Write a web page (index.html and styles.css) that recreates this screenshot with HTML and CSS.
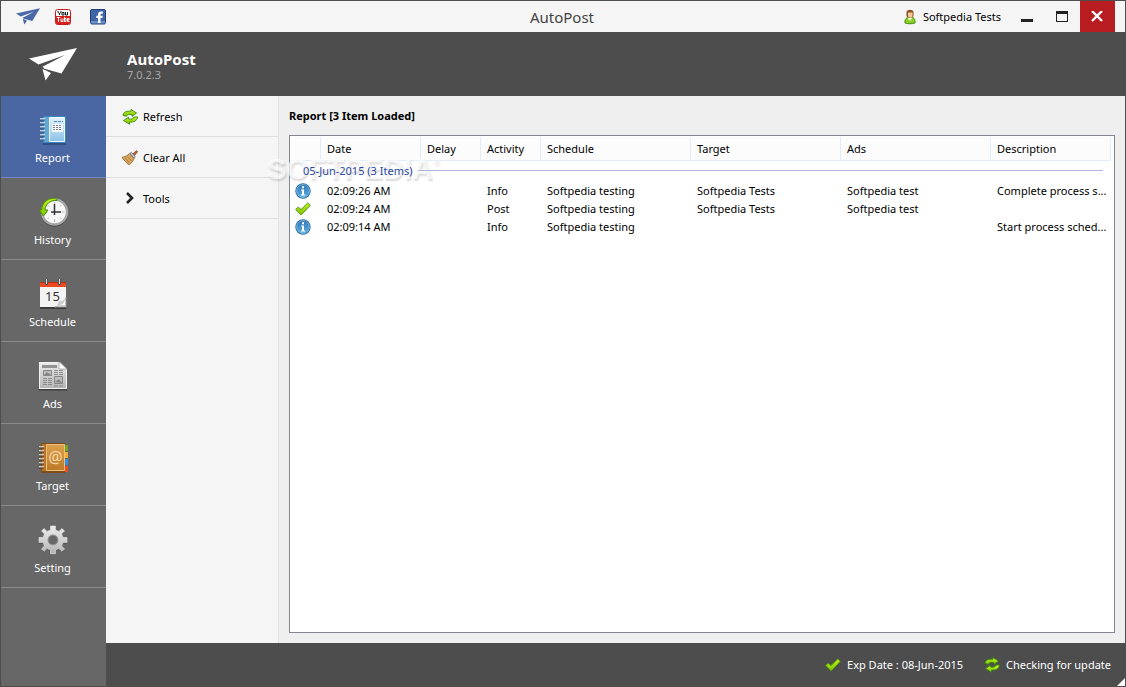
FILE: index.html
```html
<!doctype html>
<html lang="en">
    <head>
        <meta charset="utf-8">
        <title>AutoPost</title>
        <meta name="viewport" content="width=device-width, initial-scale=1">
        <link rel="stylesheet" href="styles.css">
    </head>
    <body>
        <!-- shared icons -->
        <svg class="defs" width="0" height="0" aria-hidden="true">
            <linearGradient id="greenFill" x1="0" y1="0" x2="0" y2="1"><stop offset="0" stop-color="#c4f020"/><stop offset="1" stop-color="#7fc400"/></linearGradient>
            <linearGradient id="blueFill" x1="0" y1="0" x2="0" y2="1"><stop offset="0" stop-color="#2f75b5"/><stop offset="1" stop-color="#5cb0e0"/></linearGradient>
            <linearGradient id="greyFill" x1="0" y1="0" x2="0" y2="1"><stop offset="0" stop-color="#ededed"/><stop offset="1" stop-color="#b4b4b4"/></linearGradient>
            <linearGradient id="coverFill" x1="0" y1="0" x2="0" y2="1"><stop offset="0" stop-color="#e2f2fb"/><stop offset="1" stop-color="#8ac2e6"/></linearGradient>
            <linearGradient id="tanFill" x1="0" y1="0" x2="0" y2="1"><stop offset="0" stop-color="#dda04c"/><stop offset="1" stop-color="#bd7a27"/></linearGradient>
            <symbol id="plane" viewBox="0 0 48 33">
                <path d="M0 10.500 48 0 32.500 25.500 15.500 20.800 13.500 18.800 36 7 9.500 16.500ZM13.500 21 16 22 22 25 16.500 32.500Z"/>
            </symbol>
            <symbol id="refresh" viewBox="0 0 16 16">
                <g fill="url(#greenFill)" stroke="#348a10" stroke-width=".9" stroke-linejoin="round">
                    <path d="M1 6.500C1.500 2.500 5 1.800 9 2.300L9 .5 14.500 4 10 7.500V5.600C7 5 5 5.500 4.500 7.200Z"/>
                    <path d="M15.500 8C15 12 11.500 13.500 7.500 13V15.200L1.500 11.500 6.500 8.300V10C9 10.500 11.500 10 12 8Z"/>
                </g>
            </symbol>
            <symbol id="check" viewBox="0 0 16 14">
                <path d="M.7 7.500 3.200 5.200 6 7.600 12.700 1 15.300 3.300 6.200 13Z" fill="url(#greenFill)" stroke="#4d9a0a" stroke-width="1" stroke-linejoin="round"/>
            </symbol>
            <symbol id="info" viewBox="0 0 16 16">
                <circle cx="8" cy="8" r="7.700" fill="#2669a6"/>
                <circle cx="8" cy="8" r="6.400" fill="url(#blueFill)" stroke="#9ccbea" stroke-width=".7"/>
                <path d="M7 3.300h2v2H7zM6 6.400h3v5h1.300v1.200H5.800v-1.200H7V7.500H6z" fill="#fff"/>
            </symbol>
            <symbol id="gear" viewBox="0 0 32 32">
                <path fill-rule="evenodd" stroke-linejoin="round" d="M13.500 2h5v4l3.500 1.400 3-2.900 2.500 2.500-2.900 3L26 13.500h4v5h-4L24.600 22l2.900 3-2.500 2.500-3-2.900-3.500 1.400v4h-5v-4L10 24.600l-3 2.900L4.500 25l2.900-3L6 18.500H2v-5h4L7.400 10 4.500 7 7 4.500l3 2.900L13.500 6zM16 11a5 5 0 1 0 0 10 5 5 0 1 0 0-10z"/>
            </symbol>
        </svg>

        <div class="window">
            <header class="titlebar">
                <nav class="links">
                    <a href="#home" aria-label="AutoPost"><svg class="icon-logo-small" width="24" height="17"><use href="#plane"/></svg></a>
                    <a href="#youtube" aria-label="YouTube">
                        <svg width="16" height="16" viewBox="0 0 16 16">
                            <rect x=".5" y=".5" width="15" height="15" rx="2" fill="#fff" stroke="#c01c1c"/>
                            <path d="M1 7h14v7a1 1 0 0 1-1 1H2a1 1 0 0 1-1-1z" fill="#d81e18"/>
                            <path d="M3 2v1.500l1.500 1L6 3.500V2M4.500 4.500V6M7 3.500h2V6H7zM10.500 3v3h2V3" fill="none" stroke="#181818"/>
                            <path d="M1.800 8.500h3.400M3.500 8.500V13M6 9.500v3h2v-3M9.500 8v4.500h1.500v-3H9.500M14.500 12.500H12.500v-3h1.500v1.500h-1.500" fill="none" stroke="#fff"/>
                        </svg>
                    </a>
                    <a href="#facebook" aria-label="Facebook">
                        <svg width="16" height="16" viewBox="0 0 16 16">
                            <rect x=".5" y=".5" width="15" height="14.500" rx="1.500" fill="#3f65a6" stroke="#203f7c"/>
                            <path d="M1 12h14v2.500H1z" fill="#6c8fc4"/>
                            <path d="M8 14V9H6.300V6.800H8V5.500C8 3.500 9.200 2.500 11 2.500h1.800v2.200h-1.200c-.8 0-1.100.4-1.100 1.100v1h2.200L12.400 9h-1.900v5z" fill="#fff"/>
                        </svg>
                    </a>
                </nav>
                <h1 class="title">AutoPost</h1>
                <div class="controls">
                    <span class="user">
                        <svg width="12" height="16" viewBox="0 0 12 16">
                            <path d="M1 14C.5 10 2.500 8 6 8s5.500 2 5 6C8 15 4 15 1 14Z" fill="#8bcf22" stroke="#478b10"/>
                            <path d="M3.700 8.700 6 12l2.300-3.300z" fill="#f6faea"/>
                            <path d="M2.500 3C3 0 9 0 9.500 3v4c-1 2-6 2-7 0z" fill="#8b5225"/>
                            <path d="M4 3.500h4.500V7C8 9 4.500 9 4 7z" fill="#f5c596"/>
                        </svg>
                        Softpedia Tests
                    </span>
                    <button class="win-btn" type="button" aria-label="Minimize"><svg width="12" height="12"><path d="M0 8h12v3H0z" fill="#222"/></svg></button>
                    <button class="win-btn" type="button" aria-label="Maximize"><svg width="12" height="12"><path d="M0 0h12v11H0zM1 3v7h10V3z" fill="#222" fill-rule="evenodd"/></svg></button>
                    <button class="win-btn close" type="button" aria-label="Close"><svg width="12" height="12"><path d="M1 0 11 10M11 0 1 10" stroke="#fff" stroke-width="2.400"/></svg></button>
                </div>
            </header>

            <div class="brand">
                <div class="brand-logo"><svg width="48" height="33"><use href="#plane"/></svg></div>
                <div class="brand-text">
                    <div class="brand-name">AutoPost</div>
                    <div class="brand-version">7.0.2.3</div>
                </div>
            </div>

            <div class="body">
                <nav class="sidebar">
                    <a class="side-item active" href="#report">
                        <svg width="32" height="32" viewBox="0 0 32 32">
                            <path d="M6 30h23" stroke="#263f6c" stroke-width="2" opacity=".6"/>
                            <path d="M6 2h23v27H6z" fill="#3a86bd"/>
                            <path d="M7 3h5v25H7z" fill="#65a8d4"/>
                            <path d="M12.500 3.500h15v24h-15z" fill="url(#coverFill)" stroke="#edf8ff"/>
                            <path d="M15 10h11v8H15z" fill="#f9fcfe"/>
                            <path d="M17 7.500h9" stroke="#4d83b2" stroke-dasharray="3 1"/>
                            <path d="M16 11.500h9M16 13.500h9M16 15.500h9" stroke="#778491" stroke-dasharray="2 1"/>
                            <path d="M3 5h5M3 9h5M3 13h5M3 17h5M3 21h5M3 25h5" stroke="#e8eef3" stroke-width="1.500"/>
                            <path d="M3 6h5M3 10h5M3 14h5M3 18h5M3 22h5M3 26h5" stroke="#31577b"/>
                        </svg>
                        Report
                    </a>
                    <a class="side-item" href="#history">
                        <svg width="32" height="32" viewBox="0 0 32 32">
                            <circle cx="17.500" cy="17" r="13.500" fill="#3e3e3e"/>
                            <circle cx="17.500" cy="16" r="12.500" fill="#f7f7f7" stroke="#a6a6a6" stroke-width="2.500"/>
                            <path d="M17.500 6v3M17.500 23v3M7.500 16h3M24.500 16h3M10.500 9l1.500 1.500M24.500 9 23 10.500M10.500 23l1.500-1.500M24.500 23 23 21.500" stroke="#b9b9b9"/>
                            <path d="M17.500 8v11M14 16h10" stroke="#353535" stroke-width="1.500"/>
                            <path d="M20 3C11 1 5 6 4.600 14H2l4.500 6 4.500-6H8C8.500 8 13 4 20 4.500Z" fill="url(#greenFill)" stroke="#438d0d"/>
                        </svg>
                        History
                    </a>
                    <a class="side-item" href="#schedule">
                        <svg width="32" height="32" viewBox="0 0 32 32">
                            <path d="M3 30h26" stroke="#3c3c3c" stroke-width="2"/>
                            <path d="M3 4h26v25H3z" fill="#f3f3f3"/>
                            <path d="M3 4h26v5H3z" fill="#ef4a1f"/>
                            <path d="M3 4.500h26" stroke="#b8310f"/>
                            <path d="M9.500 1v6M22.500 1v6" stroke="#555" stroke-width="3"/>
                            <path d="M9.500 1v5M22.500 1v5" stroke="#ddd"/>
                            <path d="M29 19v10H18c4-1 4-4 4-5 3 0 6-1 7-5Z" fill="#d2d2d2" stroke="#a8a8a8" stroke-width=".7"/>
                            <path d="M24 27c2-1 3-3 4-5v5z" fill="#fff"/>
                            <text class="cal-day" x="15.500" y="23" text-anchor="middle">15</text>
                        </svg>
                        Schedule
                    </a>
                    <a class="side-item" href="#ads">
                        <svg width="32" height="32" viewBox="0 0 32 32">
                            <path d="M2 29.500h28" stroke="#3e3e3e" stroke-width="2"/>
                            <path d="M2 2h21l7 7v20H2z" fill="url(#greyFill)"/>
                            <path d="M2.500 28.500v-26h20l7 7v19z" fill="none" stroke="#f1f1f1"/>
                            <path d="M22 2v7h8z" fill="#fff" stroke="#999" stroke-width=".7"/>
                            <path d="M5 5h15v3H5z" fill="#929292"/>
                            <path d="M6.500 10.500h8v5h-8zM17.500 16.500h8v7h-8z" fill="#bdbdbd" stroke="#858585"/>
                            <path d="m7 15 3-3 4 3zM18 22l4-3 3 4z" fill="#858585"/>
                            <path d="M17 10.500h9M17 12.500h9M17 14.500h9M6 18.500h9M6 20.500h9M6 22.500h9M6 24.500h9M17 26h9" stroke="#8a8a8a" stroke-dasharray="4 1"/>
                        </svg>
                        Ads
                    </a>
                    <a class="side-item" href="#target">
                        <svg width="32" height="32" viewBox="0 0 32 32">
                            <path d="M28 3h3v6h-3z" fill="#76a720"/>
                            <path d="M28 10h3v6h-3z" fill="#f4ad2f"/>
                            <path d="M28 17h3v6h-3z" fill="#338ee4"/>
                            <path d="M28 24h3v6h-3z" fill="#ed4e24"/>
                            <path d="M4 1h24v30H4z" fill="#7e4c18"/>
                            <path d="M5 2h4v27H5z" fill="#b87529"/>
                            <path d="M9.500 2.500h18v26h-18z" fill="url(#tanFill)" stroke="#edc07c"/>
                            <text class="at-sign" x="18.500" y="21" text-anchor="middle">@</text>
                            <path d="M2 5h5M2 9h5M2 13h5M2 17h5M2 21h5M2 25h5" stroke="#e6e6e6" stroke-width="1.500"/>
                            <path d="M2 6h5M2 10h5M2 14h5M2 18h5M2 22h5M2 26h5" stroke="#49301b"/>
                        </svg>
                        Target
                    </a>
                    <a class="side-item" href="#setting">
                        <svg width="32" height="32" viewBox="0 0 32 32">
                            <use href="#gear" y="1" fill="#404040"/>
                            <use href="#gear" fill="url(#greyFill)" stroke="#e4e4e4" stroke-width=".6"/>
                            <circle cx="16" cy="16" r="5" fill="#686868" stroke="#969696"/>
                        </svg>
                        Setting
                    </a>
                </nav>

                <div class="work">
                    <div class="panes">
                        <aside class="actions">
                            <button class="action" type="button"><svg width="16" height="16"><use href="#refresh"/></svg>Refresh</button>
                            <button class="action" type="button">
                                <svg width="16" height="16" viewBox="0 0 16 16">
                                    <path d="m11 4 3.500-3.500 1.200 1.200L12.500 5.500z" fill="#bd6335" stroke="#80401f" stroke-width=".7"/>
                                    <path d="M7.500 3.500 12 8.500C11 11.500 9 14 6.500 14.700L.5 8.500V7C3 7 5.500 5.500 7.500 3.500Z" fill="#d8a660" stroke="#916329" stroke-width=".8"/>
                                    <path d="m3 8 4 4.500M5.500 6.500l4 4.500" stroke="#9b6c32" stroke-width=".7"/>
                                    <path d="M8 3.300 9.500 2.300l3.800 4.500-1.200 1.500z" fill="#d8d8df" stroke="#62636e" stroke-width=".8"/>
                                </svg>
                                Clear All
                            </button>
                            <button class="action" type="button"><svg width="16" height="16"><path d="m5 2 5 5-5 5" fill="none" stroke="#222" stroke-width="2.600"/></svg>Tools</button>
                        </aside>

                        <main class="report">
                            <h2 class="report-title">Report [3 Item Loaded]</h2>
                            <div class="list">
                                <table>
                                    <colgroup>
                                        <col class="c-icon"><col class="c-date"><col class="c-short"><col class="c-short">
                                        <col class="c-wide"><col class="c-wide"><col class="c-wide"><col>
                                    </colgroup>
                                    <thead>
                                        <tr><th></th><th>Date</th><th>Delay</th><th>Activity</th><th>Schedule</th><th>Target</th><th>Ads</th><th>Description</th></tr>
                                    </thead>
                                    <tbody>
                                        <tr class="group"><td colspan="8"><div class="group-label">05-Jun-2015 (3 Items)</div></td></tr>
                                        <tr><td><svg width="16" height="16"><use href="#info"/></svg></td><td>02:09:26 AM</td><td></td><td>Info</td><td>Softpedia testing</td><td>Softpedia Tests</td><td>Softpedia test</td><td>Complete process s...</td></tr>
                                        <tr><td><svg width="16" height="14"><use href="#check"/></svg></td><td>02:09:24 AM</td><td></td><td>Post</td><td>Softpedia testing</td><td>Softpedia Tests</td><td>Softpedia test</td><td></td></tr>
                                        <tr><td><svg width="16" height="16"><use href="#info"/></svg></td><td>02:09:14 AM</td><td></td><td>Info</td><td>Softpedia testing</td><td></td><td></td><td>Start process sched...</td></tr>
                                    </tbody>
                                </table>
                            </div>
                            <div class="watermark">SOFTPEDIA<sup>®</sup></div>
                        </main>
                    </div>

                    <footer class="statusbar">
                        <span class="status"><svg width="16" height="14"><use href="#check"/></svg>Exp Date : 08-Jun-2015</span>
                        <span class="status"><svg width="16" height="16"><use href="#refresh"/></svg>Checking for update</span>
                        <svg class="grip" width="8" height="8"><path d="M8 0v8H0z" fill="#fff"/></svg>
                    </footer>
                </div>
            </div>
        </div>
    </body>
</html>
```
FILE: styles.css
```css
/* common */
* { box-sizing: border-box; }
html, body { height: 100%; }
body { margin: 0; font-family: "Noto Sans", "Open Sans", sans-serif; font-size: 11px; line-height: 18px; color: #000; }
h1, h2 { margin: 0; font-weight: normal; }
a { text-decoration: none; color: inherit; }
button { font: inherit; color: inherit; border: 0; padding: 0; background: none; }
svg { display: block; flex: none; }
.defs { position: absolute; }

.window { min-height: 100%; display: flex; flex-direction: column; border: 1px solid #4d4d4d; background: #4d4d4d; }

/* title bar */
.titlebar { display: grid; grid-template-columns: 1fr auto 1fr; align-items: center; height: 31px; background: #f5f5f5; }
.links { display: flex; align-items: center; gap: 19px; padding-left: 15px; }
.links a:first-child { margin-right: -4px; }
.icon-logo-small { fill: #4a68a8; }
.title { font-size: 15px; line-height: 24px; color: #444; padding-right: 2px; }
.controls { display: flex; align-items: center; justify-content: flex-end; padding-right: 10px; }
.user { display: flex; align-items: center; gap: 7px; margin-right: 9px; }
.win-btn { width: 35px; height: 31px; display: flex; align-items: center; justify-content: center; padding-right: 2px; }
.win-btn.close { background: #b71c20; }

/* brand */
.brand { display: flex; align-items: center; height: 64px; }
.brand-logo { width: 126px; padding-left: 28px; fill: #fff; }
.brand-text { padding-top: 4px; }
.brand-name { font-size: 15px; font-weight: bold; color: #fff; }
.brand-version { line-height: 14px; color: #a8a8a8; }

/* sidebar */
.body { flex: 1; display: flex; }
.sidebar { width: 105px; background: #676767; color: #fff; }
.side-item { height: 82px; display: flex; flex-direction: column; align-items: center; gap: 3px; padding: 18px 2px 0 0; border-bottom: 1px solid #8a8a8a; }
.side-item.active { background: #4a67a3; border-color: #6d86c6; }
.cal-day { font-size: 13px; fill: #333; }
.at-sign { font-size: 16px; fill: #f6d9a9; }

/* panes */
.work { flex: 1; min-width: 0; display: flex; flex-direction: column; }
.panes { flex: 1; display: flex; background: #efefef; }
.actions { width: 173px; background: #f5f5f5; border-right: 1px solid #e2e2e2; }
.action { width: 100%; height: 41px; display: flex; align-items: center; gap: 5px; padding: 2px 0 0 16px; border-bottom: 1px solid #dedede; }

/* report */
.report { position: relative; flex: 1; min-width: 0; display: flex; flex-direction: column; padding: 11px 10px 10px; }
.report-title { font-size: 11px; font-weight: bold; margin-bottom: 10px; }
.list { flex: 1; padding: 1px 3px 1px 1px; border: 1px solid #828790; background: #fff; }
table { width: 100%; table-layout: fixed; border-collapse: separate; border-spacing: 0; }
.c-icon { width: 30px; }
.c-date { width: 100px; }
.c-short { width: 60px; }
.c-wide { width: 150px; }
th { height: 24px; padding: 0 0 0 6px; text-align: left; font-weight: normal; background: #fcfcfc; border-right: 1px solid #e3edfa; border-bottom: 1px solid #e3edfa; }
td { height: 18px; padding: 0 0 0 6px; white-space: nowrap; overflow: hidden; }
td:first-child { padding-left: 4px; }
.group td { height: 21px; padding: 0 8px 2px 12px; }
.group-label { position: relative; z-index: 1; display: flex; align-items: center; gap: 5px; color: #2b4aa0; }
.group-label::after { content: ""; flex: 1; height: 1px; background: #a9bade; }

.watermark { position: absolute; left: -12px; top: 55px; font: bold 29px/36px "Liberation Sans", sans-serif; color: rgba(255, 255, 255, .7); text-shadow: 1px 2px 2px rgba(0, 0, 0, .14); pointer-events: none; }
.watermark sup { font-size: 9px; line-height: 9px; vertical-align: 14px; }

/* status bar */
.statusbar { position: relative; display: flex; justify-content: flex-end; align-items: center; gap: 21px; height: 43px; padding-right: 14px; color: #fff; }
.status { display: flex; align-items: center; gap: 6px; }
.grip { position: absolute; right: 0; bottom: 0; }
```
